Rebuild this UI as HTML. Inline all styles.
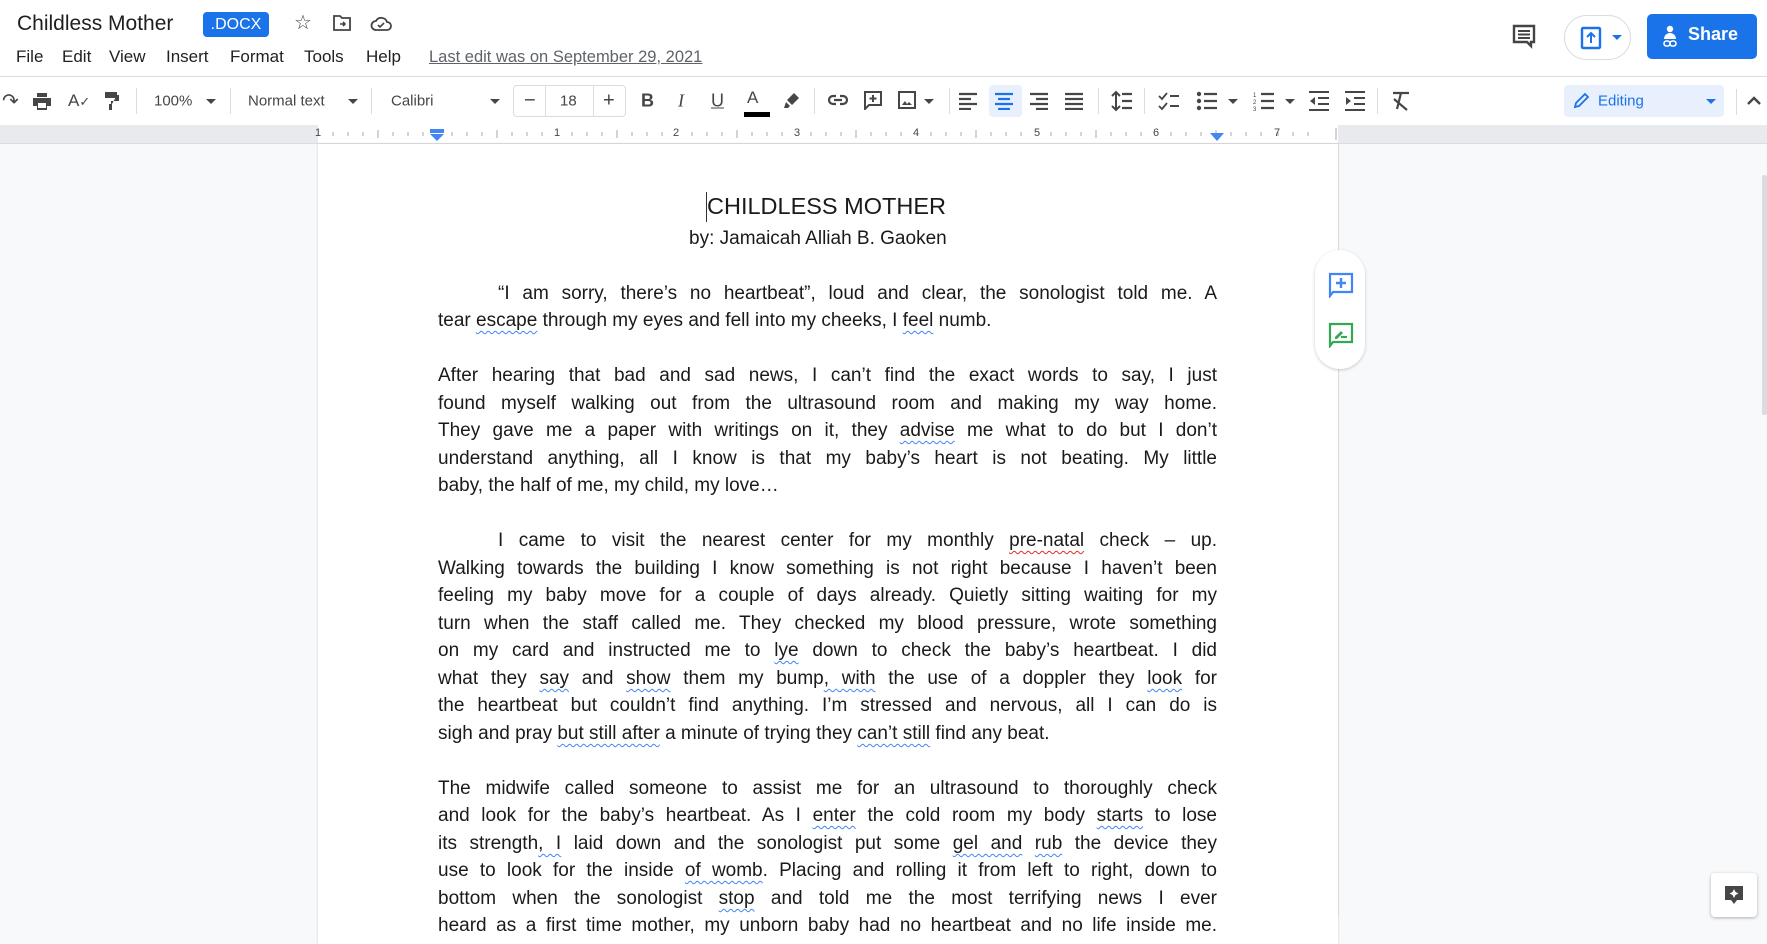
<!DOCTYPE html>
<html><head><meta charset="utf-8"><style>
*{margin:0;padding:0;box-sizing:border-box}
body{width:1767px;height:917px;overflow:hidden;background:#f8f9fa;font-family:"Liberation Sans",Arial,sans-serif;position:relative;color:#202124}
.a{position:absolute}
#hdr{position:absolute;left:0;top:0;width:1767px;height:77px;background:#fff;border-bottom:1px solid #dadce0}
#tb{position:absolute;left:0;top:77px;width:1767px;height:48px;background:#fff}
#ruler{position:absolute;left:0;top:125px;width:1767px;height:19px;background:#e8eaed;border-bottom:1px solid #dadce0}
.menu{position:absolute;top:47px;font-size:17px;color:#202124}
.ti{position:absolute;top:101px;transform:translateY(-50%);color:#444746;font-size:15px}
.sep{position:absolute;top:88px;width:1px;height:26px;background:#dadce0}
.caret{position:absolute;top:99px;width:0;height:0;border-left:5px solid transparent;border-right:5px solid transparent;border-top:5px solid #444746}
#page{position:absolute;left:318px;top:144px;width:1020px;height:800px;background:#fff;box-shadow:0 0 2px #ccc}
.ln{position:absolute;left:438px;width:779px;font-size:19px;line-height:27px;white-space:nowrap;color:#1a1a1a;text-align:justify;text-align-last:justify}
.ln.l{text-align-last:left}
.w{text-decoration:underline wavy #4285f4;text-decoration-thickness:1px;text-underline-offset:4px}
.r{text-decoration:underline wavy #d93025;text-decoration-thickness:1px;text-underline-offset:4px}
.rn{position:absolute;top:127px;font-size:11px;color:#444}
</style></head><body>
<div id="hdr"></div>
<div class="a" style="left:17px;top:12px;font-size:21px;color:#1f1f1f">Childless Mother</div>
<div class="a" style="left:203px;top:12px;width:66px;height:25px;background:#1a73e8;border-radius:4px;color:#fff;font-size:16px;line-height:25px;text-align:center">.DOCX</div>
<div class="a" style="left:294px;top:10px;font-size:20px;color:#444">☆</div>
<svg class="a" style="left:332px;top:14px" width="20" height="18" viewBox="0 0 20 18"><path d="M2 2h6l2 2h8v12H2z" fill="none" stroke="#444" stroke-width="1.8"/><path d="M8 10h5M11 8l2 2-2 2" stroke="#444" stroke-width="1.6" fill="none"/></svg>
<svg class="a" style="left:370px;top:14px" width="22" height="18" viewBox="0 0 22 18"><path d="M6 16h11a4 4 0 0 0 0-8 6 6 0 0 0-11-1A4.5 4.5 0 0 0 6 16z" fill="none" stroke="#444" stroke-width="1.8"/><path d="M8 11l2 2 4-4" stroke="#444" stroke-width="1.6" fill="none"/></svg>
<div class="menu" style="left:16px">File</div>
<div class="menu" style="left:62px">Edit</div>
<div class="menu" style="left:109px">View</div>
<div class="menu" style="left:166px">Insert</div>
<div class="menu" style="left:230px">Format</div>
<div class="menu" style="left:304px">Tools</div>
<div class="menu" style="left:366px">Help</div>
<div class="menu" style="left:429px;color:#5f6368;text-decoration:underline;font-size:16.5px;top:48px">Last edit was on September 29, 2021</div>
<svg class="a" style="left:1511px;top:23px" width="26" height="26" viewBox="0 0 26 26"><path d="M3 3h20v16h-3v4l-4-4H3z" fill="none" stroke="#444" stroke-width="2.4"/><path d="M7 8h12M7 11.5h12M7 15h12" stroke="#444" stroke-width="2"/></svg>
<div class="a" style="left:1564px;top:15px;width:67px;height:45px;border:1px solid #dadce0;border-radius:23px;background:#fff"></div>
<svg class="a" style="left:1580px;top:26px" width="22" height="24" viewBox="0 0 22 24"><rect x="2" y="2" width="18" height="20" rx="1" fill="none" stroke="#1a73e8" stroke-width="2.4"/><path d="M11 17V8M7 11l4-4 4 4" stroke="#1a73e8" stroke-width="2" fill="none"/></svg>
<div class="caret" style="left:1612px;top:35px;border-top-color:#1a73e8"></div>
<div class="a" style="left:1647px;top:14px;width:110px;height:45px;background:#1a73e8;border-radius:5px"></div>
<svg class="a" style="left:1662px;top:25px" width="16" height="24" viewBox="0 0 16 24"><circle cx="8" cy="4" r="3.2" fill="#fff"/><path d="M2 14a6 6 0 0 1 12 0z" fill="#fff"/><rect x="2" y="16" width="6" height="5" rx="2.5" fill="none" stroke="#fff" stroke-width="1.6"/><rect x="8" y="16" width="6" height="5" rx="2.5" fill="none" stroke="#fff" stroke-width="1.6"/></svg>
<div class="a" style="left:1688px;top:24px;color:#fff;font-size:18px;font-weight:bold">Share</div>

<div id="tb"></div>
<div class="ti" style="left:2px;font-size:20px">↷</div>
<svg class="a" style="left:32px;top:92px" width="20" height="18" viewBox="0 0 20 18"><path d="M5 1h10v4H5z M1 6h18v8h-4v4H5v-4H1z" fill="#444746"/><rect x="6" y="11" width="8" height="5" fill="#fff"/></svg>
<div class="ti" style="left:68px;font-size:17px">A<span style="font-size:13px">✓</span></div>
<svg class="a" style="left:104px;top:91px" width="16" height="20" viewBox="0 0 16 20"><path d="M1 1h12v6H1zM13 4h2v6H7v3H5v6h3v-6" fill="#444746"/></svg>
<div class="sep" style="left:136px"></div>
<div class="ti" style="left:154px">100%</div><div class="caret" style="left:206px"></div>
<div class="sep" style="left:230px"></div>
<div class="ti" style="left:248px">Normal text</div><div class="caret" style="left:348px"></div>
<div class="sep" style="left:371px"></div>
<div class="ti" style="left:391px">Calibri</div><div class="caret" style="left:490px"></div>
<div class="a" style="left:513px;top:85px;width:113px;height:32px;border:1px solid #dadce0;border-radius:4px"></div>
<div class="a" style="left:545px;top:85px;width:1px;height:32px;background:#dadce0"></div>
<div class="a" style="left:593px;top:85px;width:1px;height:32px;background:#dadce0"></div>
<div class="ti" style="left:524px;font-size:20px">−</div>
<div class="ti" style="left:560px">18</div>
<div class="ti" style="left:603px;font-size:20px">+</div>
<div class="ti" style="left:641px;font-weight:bold;font-size:18px">B</div>
<div class="ti" style="left:678px;font-style:italic;font-size:18px;font-family:'Liberation Serif',serif">I</div>
<div class="ti" style="left:711px;text-decoration:underline;font-size:18px">U</div>
<div class="ti" style="left:747px;font-size:17px;top:98px">A</div>
<div class="a" style="left:744px;top:112px;width:26px;height:5px;background:#000"></div>
<svg class="a" style="left:783px;top:91px" width="18" height="18" viewBox="0 0 18 18"><path d="M11 2l5 5-7 7-5-5z M3 11l4 4-2 2H1z" fill="#444746"/></svg>
<div class="sep" style="left:814px"></div>
<svg class="a" style="left:827px;top:93px" width="22" height="14" viewBox="0 0 22 14"><path d="M9 3H6a4 4 0 0 0 0 8h3M13 3h3a4 4 0 0 1 0 8h-3M7 7h8" fill="none" stroke="#444746" stroke-width="2.2"/></svg>
<svg class="a" style="left:863px;top:90px" width="20" height="20" viewBox="0 0 20 20"><path d="M2 2h16v13H6l-4 4z" fill="none" stroke="#444746" stroke-width="2"/><path d="M10 5v7M6.5 8.5h7" stroke="#444746" stroke-width="2"/></svg>
<svg class="a" style="left:898px;top:91px" width="18" height="18" viewBox="0 0 18 18"><rect x="1" y="1" width="16" height="16" fill="none" stroke="#444746" stroke-width="2"/><path d="M4 14l3-4 2 3 2-2 3 3z" fill="#444746"/></svg>
<div class="caret" style="left:924px"></div>
<div class="sep" style="left:949px"></div>
<div class="a" style="left:989px;top:85px;width:33px;height:32px;background:#e8f0fe;border-radius:4px"></div>
<svg class="a" style="left:959px;top:92px" width="140" height="18" viewBox="0 0 140 18"><g stroke="#444746" stroke-width="2.2"><path d="M0 2h18M0 7h12M0 12h18M0 17h12"/><path d="M106 2h18M106 7h18M106 12h18M106 17h18"/><path d="M71 2h18M77 7h12M71 12h18M77 17h12"/></g><path d="M36 2h18M39 7h12M36 12h18M39 17h12" stroke="#1a73e8" stroke-width="2.2"/></svg>
<div class="sep" style="left:1098px"></div>
<svg class="a" style="left:1111px;top:90px" width="22" height="22" viewBox="0 0 22 22"><path d="M5 2v18M1 6l4-4 4 4M1 16l4 4 4-4" fill="none" stroke="#444746" stroke-width="2"/><path d="M11 4h10M11 11h10M11 18h10" stroke="#444746" stroke-width="2.2"/></svg>
<div class="sep" style="left:1144px"></div>
<svg class="a" style="left:1158px;top:91px" width="22" height="20" viewBox="0 0 22 20"><path d="M1 5l3 3 5-6M1 15l3 3 5-6" fill="none" stroke="#444746" stroke-width="1.8"/><path d="M12 5h9M12 15h9" stroke="#444746" stroke-width="2"/></svg>
<svg class="a" style="left:1196px;top:91px" width="22" height="20" viewBox="0 0 22 20"><g fill="#444746"><circle cx="3" cy="3" r="2.2"/><circle cx="3" cy="10" r="2.2"/><circle cx="3" cy="17" r="2.2"/></g><path d="M8 3h13M8 10h13M8 17h13" stroke="#444746" stroke-width="2.2"/></svg>
<div class="caret" style="left:1228px"></div>
<svg class="a" style="left:1253px;top:91px" width="22" height="20" viewBox="0 0 22 20"><text x="0" y="6" font-size="6" fill="#444746">1</text><text x="0" y="13" font-size="6" fill="#444746">2</text><text x="0" y="20" font-size="6" fill="#444746">3</text><path d="M8 3h13M8 10h13M8 17h13" stroke="#444746" stroke-width="2.2"/></svg>
<div class="caret" style="left:1285px"></div>
<svg class="a" style="left:1308px;top:91px" width="22" height="20" viewBox="0 0 22 20"><path d="M1 1h20M10 7h11M10 13h11M1 19h20" stroke="#444746" stroke-width="2"/><path d="M7 6l-5 4 5 4z" fill="#444746"/></svg>
<svg class="a" style="left:1344px;top:91px" width="22" height="20" viewBox="0 0 22 20"><path d="M1 1h20M10 7h11M10 13h11M1 19h20" stroke="#444746" stroke-width="2"/><path d="M2 6l5 4-5 4z" fill="#444746"/></svg>
<div class="sep" style="left:1377px"></div>
<svg class="a" style="left:1391px;top:91px" width="20" height="20" viewBox="0 0 20 20"><path d="M2 2h16M10 2L6 18M3 8l13 11" fill="none" stroke="#444746" stroke-width="2.2"/></svg>
<div class="a" style="left:1564px;top:85px;width:160px;height:32px;background:#e8f0fe;border-radius:4px"></div>
<svg class="a" style="left:1572px;top:92px" width="18" height="18" viewBox="0 0 18 18"><path d="M3 15l1-4 9-9 3 3-9 9z" fill="none" stroke="#1a73e8" stroke-width="1.8"/></svg>
<div class="ti" style="left:1598px;color:#1a73e8;font-size:15px">Editing</div>
<div class="caret" style="left:1706px;border-top-color:#1a73e8"></div>
<div class="a" style="left:1736px;top:89px;width:1px;height:26px;background:#dadce0"></div>
<svg class="a" style="left:1746px;top:95px" width="16" height="10" viewBox="0 0 16 10"><path d="M2 9l6-6 6 6" fill="none" stroke="#444746" stroke-width="2.4"/></svg>

<div id="ruler"></div>
<div class="a" style="left:318px;top:125px;width:1020px;height:19px;background:#fff;border-bottom:1px solid #dadce0"></div>
<svg class="a" style="left:318px;top:125px" width="1020" height="19"><g stroke="#aaa" stroke-width="1">
<path d="M15 7v4M30 7v4M45 7v4M60 5v8M75 7v4M90 7v4M105 7v4M134 7v4M149 7v4M164 7v4M179 5v8M194 7v4M209 7v4M224 7v4M254 7v4M269 7v4M284 7v4M299 5v8M314 7v4M329 7v4M344 7v4M374 7v4M389 7v4M404 7v4M419 5v8M434 7v4M449 7v4M464 7v4M493 7v4M508 7v4M523 7v4M538 5v8M553 7v4M568 7v4M583 7v4M613 7v4M628 7v4M643 7v4M658 5v8M673 7v4M688 7v4M703 7v4M733 7v4M748 7v4M763 7v4M778 5v8M793 7v4M808 7v4M823 7v4M853 7v4M868 7v4M883 7v4M898 5v8M913 7v4M928 7v4M943 7v4M960 7v4M975 7v4M990 7v4M1018 3v12"/></g></svg>
<div class="rn" style="left:315px">1</div><div class="rn" style="left:554px">1</div><div class="rn" style="left:673px">2</div><div class="rn" style="left:794px">3</div><div class="rn" style="left:913px">4</div><div class="rn" style="left:1034px">5</div><div class="rn" style="left:1153px">6</div><div class="rn" style="left:1274px">7</div>
<svg class="a" style="left:430px;top:129px" width="15" height="13"><rect x="0" y="0" width="14" height="4" fill="#4285f4"/><path d="M0 5h14l-7 7z" fill="#4285f4"/></svg>
<svg class="a" style="left:1210px;top:133px" width="15" height="9"><path d="M0 0h14l-7 8z" fill="#4285f4"/></svg>

<div id="page"></div>
<div class="a" style="left:1338px;top:144px;width:1px;height:773px;background:#dadce0"></div>
<div class="a" style="left:707px;top:193px;font-size:23.5px;color:#1a1a1a;white-space:nowrap">CHILDLESS MOTHER</div>
<div class="a" style="left:706px;top:192px;width:1px;height:30px;background:#333"></div>
<div class="a" style="left:689px;top:228px;font-size:19px;color:#1a1a1a;white-space:nowrap">by: Jamaicah Alliah B. Gaoken</div>

<div class="ln" style="top:280px;left:498px;width:719px">“I am sorry, there’s no heartbeat”, loud and clear, the sonologist told me. A</div>
<div class="ln l" style="top:307px">tear <span class="w">escape</span> through my eyes and fell into my cheeks, I <span class="w">feel</span> numb.</div>
<div class="ln" style="top:362px">After hearing that bad and sad news, I can’t find the exact words to say, I just</div>
<div class="ln" style="top:390px">found myself walking out from the ultrasound room and making my way home.</div>
<div class="ln" style="top:417px">They gave me a paper with writings on it, they <span class="w">advise</span> me what to do but I don’t</div>
<div class="ln" style="top:445px">understand anything, all I know is that my baby’s heart is not beating. My little</div>
<div class="ln l" style="top:472px">baby, the half of me, my child, my love…</div>
<div class="ln" style="top:527px;left:498px;width:719px">I came to visit the nearest center for my monthly <span class="r">pre-natal</span> check – up.</div>
<div class="ln" style="top:555px">Walking towards the building I know something is not right because I haven’t been</div>
<div class="ln" style="top:582px">feeling my baby move for a couple of days already. Quietly sitting waiting for my</div>
<div class="ln" style="top:610px">turn when the staff called me. They checked my blood pressure, wrote something</div>
<div class="ln" style="top:637px">on my card and instructed me to <span class="w">lye</span> down to check the baby’s heartbeat. I did</div>
<div class="ln" style="top:665px">what they <span class="w">say</span> and <span class="w">show</span> them my bump<span class="w">, with</span> the use of a doppler they <span class="w">look</span> for</div>
<div class="ln" style="top:692px">the heartbeat but couldn’t find anything. I’m stressed and nervous, all I can do is</div>
<div class="ln l" style="top:720px">sigh and pray <span class="w">but still after</span> a minute of trying they <span class="w">can’t still</span> find any beat.</div>
<div class="ln" style="top:775px">The midwife called someone to assist me for an ultrasound to thoroughly check</div>
<div class="ln" style="top:802px">and look for the baby’s heartbeat. As I <span class="w">enter</span> the cold room my body <span class="w">starts</span> to lose</div>
<div class="ln" style="top:830px">its strength<span class="w">, I</span> laid down and the sonologist put some <span class="w">gel and</span> <span class="w">rub</span> the device they</div>
<div class="ln" style="top:857px">use to look for the inside <span class="w">of womb</span>. Placing and rolling it from left to right, down to</div>
<div class="ln" style="top:885px">bottom when the sonologist <span class="w">stop</span> and told me the most terrifying news I ever</div>
<div class="ln" style="top:912px">heard as a first time mother, my unborn baby had no heartbeat and no life inside me.</div>

<div class="a" style="left:1315px;top:250px;width:50px;height:119px;background:#fff;border-radius:25px;box-shadow:0 1px 3px rgba(0,0,0,.2)"></div>
<svg class="a" style="left:1328px;top:272px" width="26" height="26" viewBox="0 0 26 26"><path d="M2 2h22v18H5l-3 4z" fill="none" stroke="#4285f4" stroke-width="2.2"/><path d="M13 6v10M8 11h10" stroke="#4285f4" stroke-width="2.4"/></svg>
<svg class="a" style="left:1328px;top:322px" width="26" height="26" viewBox="0 0 26 26"><path d="M2 2h22v18H5l-3 4z" fill="none" stroke="#34a853" stroke-width="2.2"/><path d="M7 15l6-6 2 2-6 6H7z" fill="#34a853"/><path d="M13 15h6" stroke="#34a853" stroke-width="2.2"/></svg>
<div class="a" style="left:1762px;top:175px;width:5px;height:240px;background:#dadce0;border-radius:2px"></div>
<div class="a" style="left:1711px;top:873px;width:46px;height:44px;background:#fff;border-radius:4px;box-shadow:0 1px 3px rgba(0,0,0,.3)"></div>
<svg class="a" style="left:1723px;top:884px" width="22" height="22" viewBox="0 0 22 22"><path d="M2 2h18v14h-6l-3 4-3-4H2z" fill="#444746"/><path d="M11 5l1.5 3 3 1.5-3 1.5L11 14l-1.5-3-3-1.5 3-1.5z" fill="#fff"/></svg>
</body></html>
